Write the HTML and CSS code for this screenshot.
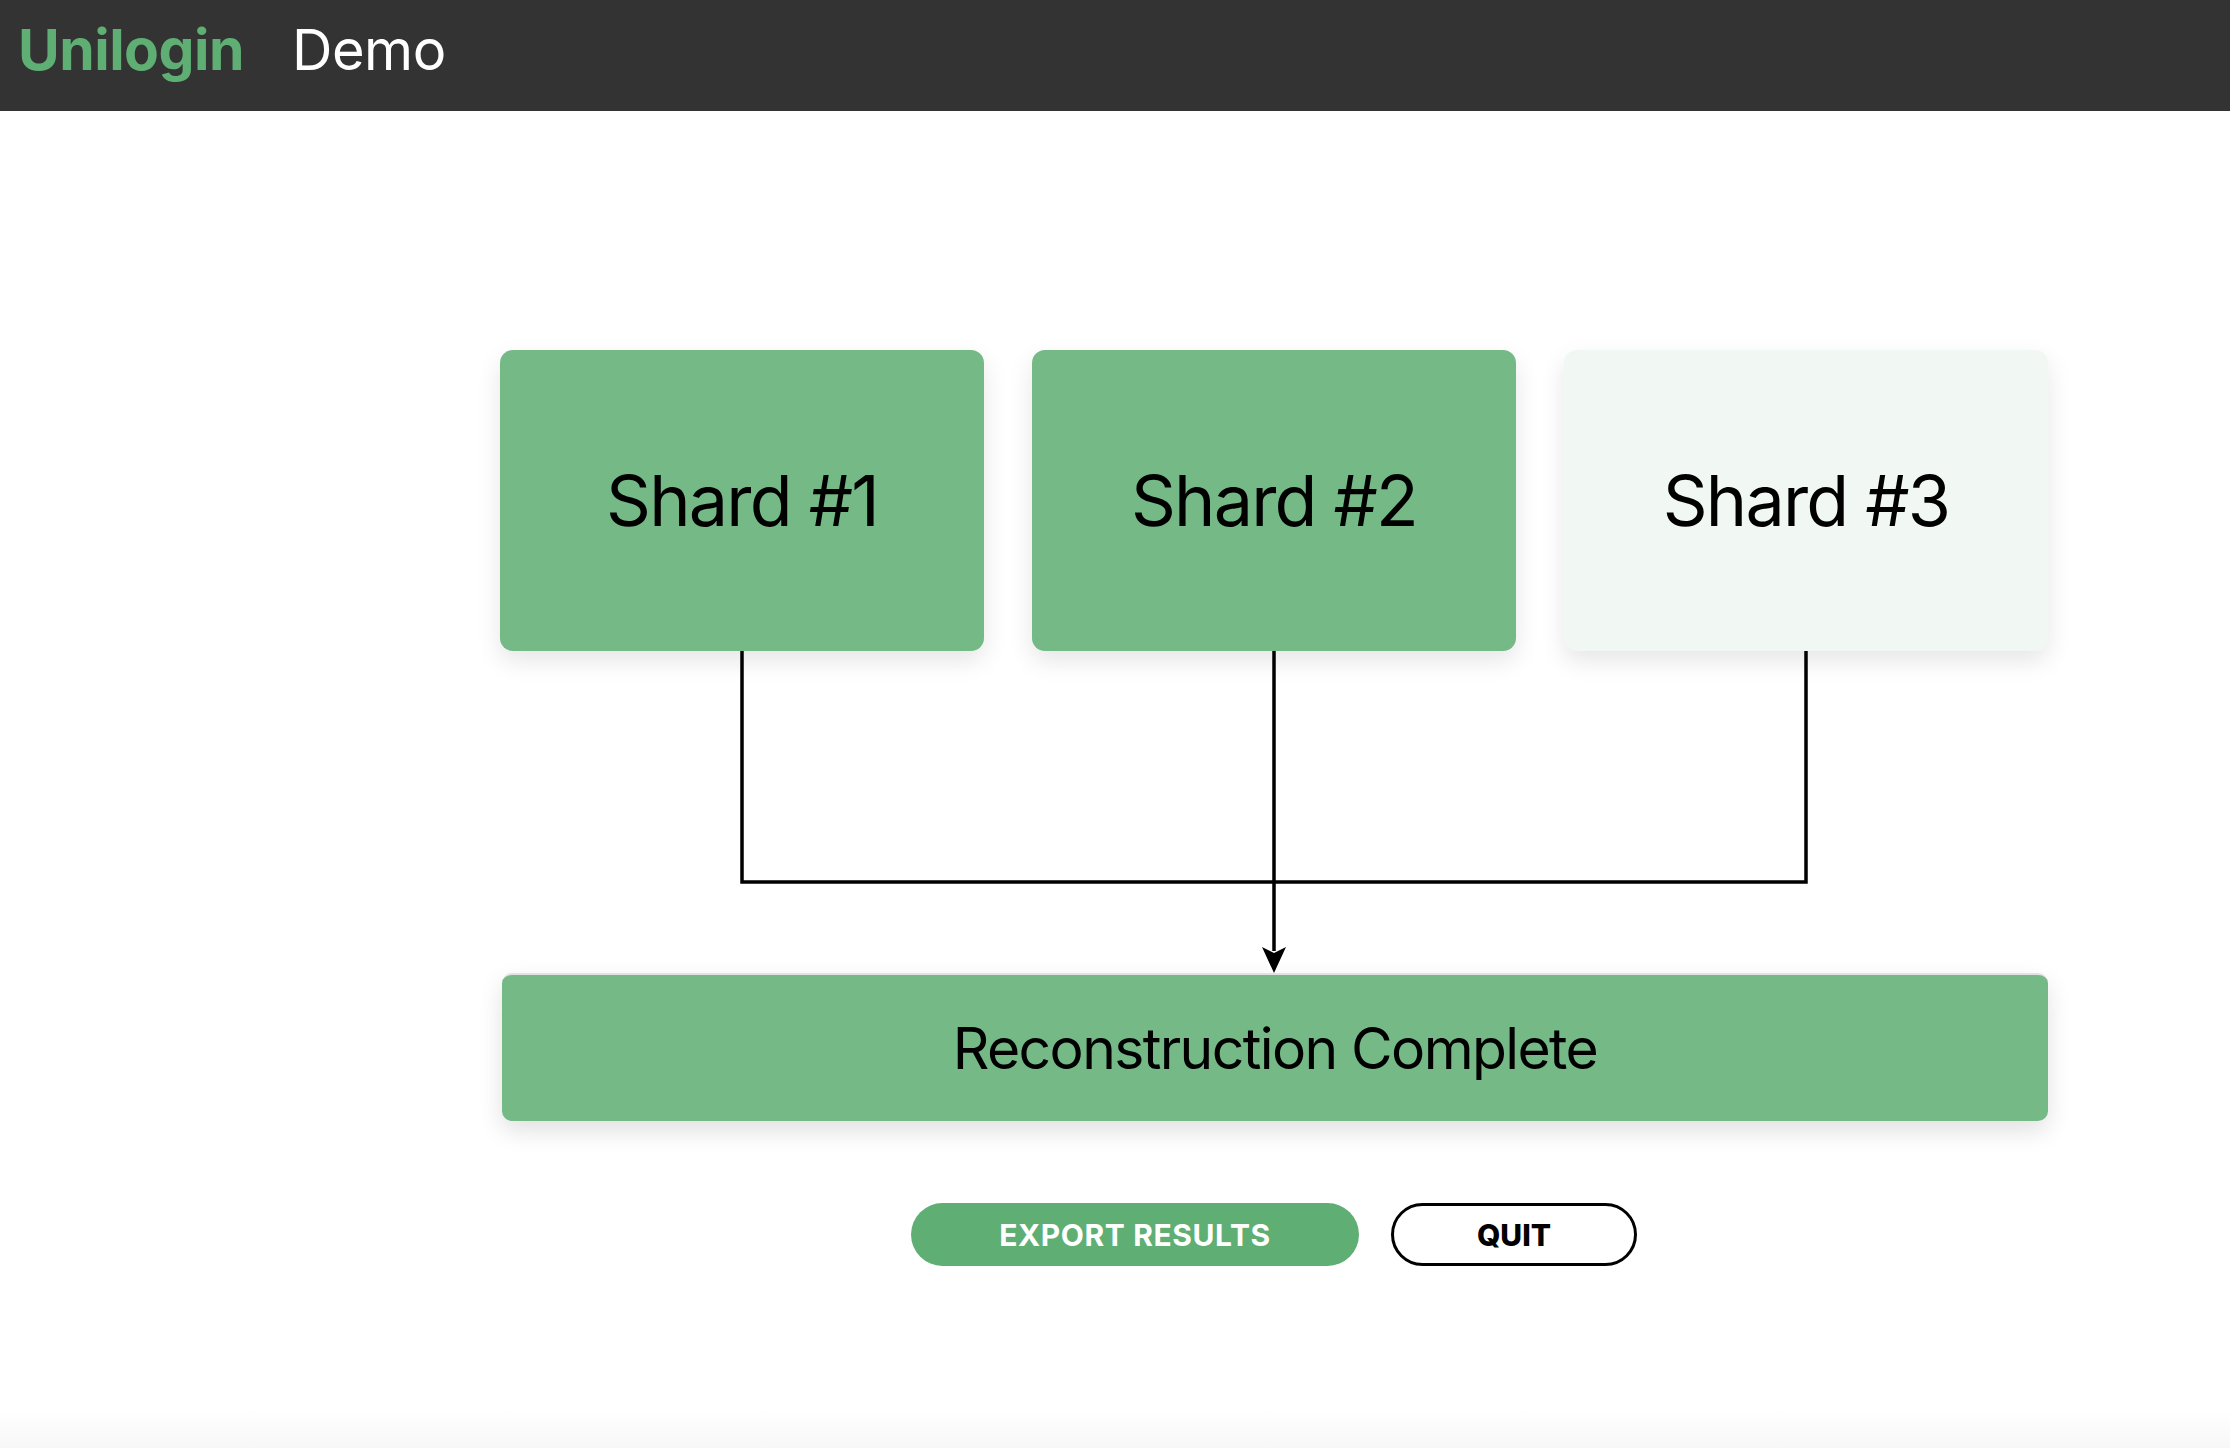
FILE: index.html
```html
<!DOCTYPE html>
<html lang="en">
<head>
    <meta charset="UTF-8">
    <meta name="viewport" content="width=device-width, initial-scale=1.0">
    <title>Unilogin Demo</title>
    <link rel="stylesheet" href="styles.css">
</head>
<body>
    <header class="header">
        <a href="#" class="logo">Unilogin</a>
        <span class="header-title">Demo</span>
    </header>

    <main class="main-content">
        <div class="flow">
            <div class="shard-row">
                <div class="shard shard-done">Shard #1</div>
                <div class="shard shard-done">Shard #2</div>
                <div class="shard shard-pending">Shard #3</div>
            </div>

            <!-- connectors from each shard down to the result bar -->
            <svg class="connector" width="1548" height="322" viewBox="0 0 1548 322">
                <path d="M242 0 V231 H1306 V0" fill="none" stroke="#000" stroke-width="3.5"/>
                <path d="M774 0 V300" fill="none" stroke="#000" stroke-width="3.5"/>
                <path d="M762 296 L774 322 L786 296 L774 302 Z" fill="#000"/>
            </svg>

            <div class="result-bar">Reconstruction Complete</div>

            <div class="actions">
                <button class="btn btn-primary">Export Results</button>
                <button class="btn btn-outline">Quit</button>
            </div>
        </div>
    </main>

    <div class="footer-shade"></div>
</body>
</html>
```

FILE: styles.css
```css
:root {
    --green: #5fae73;
    --green-light: #74b986;
    --green-pale: #f1f8f3;
    --header-bg: #333333;
    --text: #000000;
}
* {
    margin: 0;
    padding: 0;
    box-sizing: border-box;
}
body {
    font-family: Inter, "Noto Sans", sans-serif;
    color: var(--text);
    background-color: #ffffff;
    min-height: 100vh;
    display: flex;
    flex-direction: column;
}

/* Header styles */
.header {
    height: 111px;
    background-color: var(--header-bg);
    display: flex;
    align-items: center;
    gap: 48px;
    padding: 0 0 12px 18px;
}
.logo {
    font-size: 57px;
    font-weight: 700;
    color: var(--green);
    text-decoration: none;
    letter-spacing: -0.5px;
}
.header-title {
    font-size: 56px;
    font-weight: 400;
    color: #ffffff;
    letter-spacing: -0.5px;
}

/* Main content styles */
.main-content {
    flex: 1;
    padding: 239px 182px 0 500px;
}
.flow {
    width: 1548px;
}
.shard-row {
    display: flex;
    gap: 48px;
}
.shard {
    flex: 1;
    height: 301px;
    border-radius: 13px;
    display: flex;
    align-items: center;
    justify-content: center;
    font-size: 70px;
    letter-spacing: -1.8px;
    box-shadow: 0 10px 24px rgba(0, 0, 0, 0.1);
}
.shard-done {
    background-color: var(--green-light);
}
.shard-pending {
    background-color: var(--green-pale);
}
.connector {
    display: block;
}
.result-bar {
    height: 148px;
    margin-left: 2px;
    background-color: var(--green-light);
    border-top: 2px solid #e2e2e2;
    border-radius: 10px;
    display: flex;
    align-items: center;
    justify-content: center;
    font-size: 57px;
    letter-spacing: -1.6px;
    box-shadow: 0 10px 24px rgba(0, 0, 0, 0.12);
}
.actions {
    display: flex;
    justify-content: center;
    gap: 32px;
    margin-top: 82px;
}
.btn {
    height: 63px;
    border-radius: 32px;
    font-family: Inter, sans-serif;
    font-size: 30px;
    font-weight: 700;
    text-transform: uppercase;
    letter-spacing: 0.6px;
    cursor: pointer;
}
.btn-primary {
    width: 448px;
    background-color: var(--green);
    color: #ffffff;
    border: none;
}
.btn-outline {
    width: 246px;
    background-color: #ffffff;
    color: #000000;
    border: 3px solid #000000;
    font-weight: 800;
    letter-spacing: 0;
}
.footer-shade {
    height: 38px;
    background: linear-gradient(to bottom, rgba(0, 0, 0, 0), rgba(0, 0, 0, 0.03));
}
```
